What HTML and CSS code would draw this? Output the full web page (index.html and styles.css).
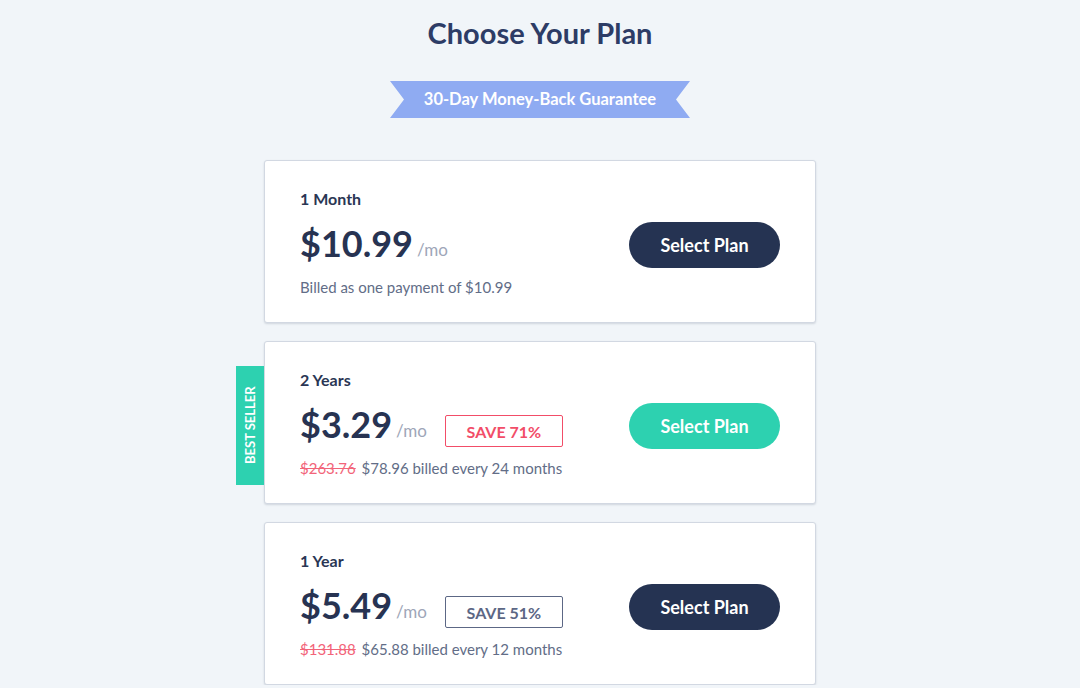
FILE: index.html
```html
<!DOCTYPE html>
<html>
<head>
    <meta charset="UTF-8">
    <title>Choose Your Plan</title>
    <link rel="stylesheet" href="styles.css">
</head>
<body>
    <div class="page">
        <h1 class="title">Choose Your Plan</h1>
        <div class="ribbon">30-Day Money-Back Guarantee</div>

        <div class="plans">
            <div class="plan">
                <div class="plan-info">
                    <div class="plan-name">1 Month</div>
                    <div class="price-row">
                        <span class="price">$10.99</span>
                        <span class="per">/mo</span>
                    </div>
                    <div class="billed">Billed as one payment of $10.99</div>
                </div>
                <button class="select dark">Select Plan</button>
            </div>

            <div class="plan">
                <div class="tag">BEST SELLER</div>
                <div class="plan-info">
                    <div class="plan-name">2 Years</div>
                    <div class="price-row">
                        <span class="price">$3.29</span>
                        <span class="per">/mo</span>
                        <span class="save red">SAVE 71%</span>
                    </div>
                    <div class="billed"><s class="old">$263.76</s> $78.96 billed every 24 months</div>
                </div>
                <button class="select teal">Select Plan</button>
            </div>

            <div class="plan">
                <div class="plan-info">
                    <div class="plan-name">1 Year</div>
                    <div class="price-row">
                        <span class="price">$5.49</span>
                        <span class="per">/mo</span>
                        <span class="save gray">SAVE 51%</span>
                    </div>
                    <div class="billed"><s class="old">$131.88</s> $65.88 billed every 12 months</div>
                </div>
                <button class="select dark">Select Plan</button>
            </div>
        </div>
    </div>
</body>
</html>
```

FILE: styles.css
```css
body {
    margin: 0;
    background-color: #f1f5f9;
    font-family: Lato, "Open Sans", sans-serif;
    color: #273352;
}
.page {
    display: flex;
    flex-direction: column;
    align-items: center;
    padding-top: 15px;
}
.title {
    margin: 0;
    font-size: 29px;
    line-height: 36px;
    font-weight: 700;
    color: #2d3c66;
}
.ribbon {
    margin-top: 30px;
    width: 300px;
    height: 37px;
    line-height: 36px;
    text-align: center;
    background-color: #8fabf2;
    color: #fff;
    font-size: 16.5px;
    font-weight: 700;
    clip-path: polygon(0 0, 100% 0, calc(100% - 14px) 50%, 100% 100%, 0 100%, 14px 50%);
}
.plans {
    margin-top: 42px;
    width: 552px;
    display: flex;
    flex-direction: column;
    gap: 18px;
}
.plan {
    position: relative;
    display: flex;
    align-items: center;
    justify-content: space-between;
    height: 163px;
    box-sizing: border-box;
    padding: 0 35px;
    background-color: #fff;
    border: 1px solid #d2d8e2;
    border-radius: 3px;
    box-shadow: 0 1px 2px rgba(60, 70, 100, 0.18);
}
.plan-info {
    display: flex;
    flex-direction: column;
    padding-top: 3px;
}
.plan-name {
    font-size: 16px;
    line-height: 20px;
    font-weight: 700;
    color: #2a3654;
}
.price-row {
    display: flex;
    align-items: center;
    margin-top: 12px;
    height: 44px;
}
.price {
    font-size: 36px;
    font-weight: 700;
    color: #273352;
}
.per {
    margin-left: 4px;
    margin-top: 13px;
    font-size: 17px;
    color: #9ea6b8;
}
.save {
    margin-left: 18px;
    margin-top: 14px;
    width: 118px;
    height: 32px;
    box-sizing: border-box;
    display: flex;
    align-items: center;
    justify-content: center;
    font-size: 16px;
    font-weight: 700;
    border-radius: 2px;
}
.save.red {
    border: 1px solid #f24d68;
    color: #f24d68;
}
.save.gray {
    border: 1px solid #5c6785;
    color: #5c6785;
}
.billed {
    margin-top: 12px;
    font-size: 15px;
    line-height: 20px;
    color: #626d87;
}
.old {
    color: #f26479;
    margin-right: 2px;
}
.select {
    margin-top: 7px;
    width: 151px;
    height: 46px;
    border: none;
    border-radius: 23px;
    color: #fff;
    font-family: Lato, "Open Sans", sans-serif;
    font-size: 18px;
    font-weight: 700;
    cursor: pointer;
}
.select.dark {
    background-color: #253352;
}
.select.teal {
    background-color: #2dd1b0;
}
.tag {
    position: absolute;
    left: -29px;
    top: 24px;
    width: 28px;
    height: 119px;
    background-color: #2dd1b0;
    display: flex;
    align-items: center;
    justify-content: center;
    writing-mode: vertical-rl;
    transform: rotate(180deg);
    color: #fff;
    font-size: 13px;
    font-weight: 700;
}
```
